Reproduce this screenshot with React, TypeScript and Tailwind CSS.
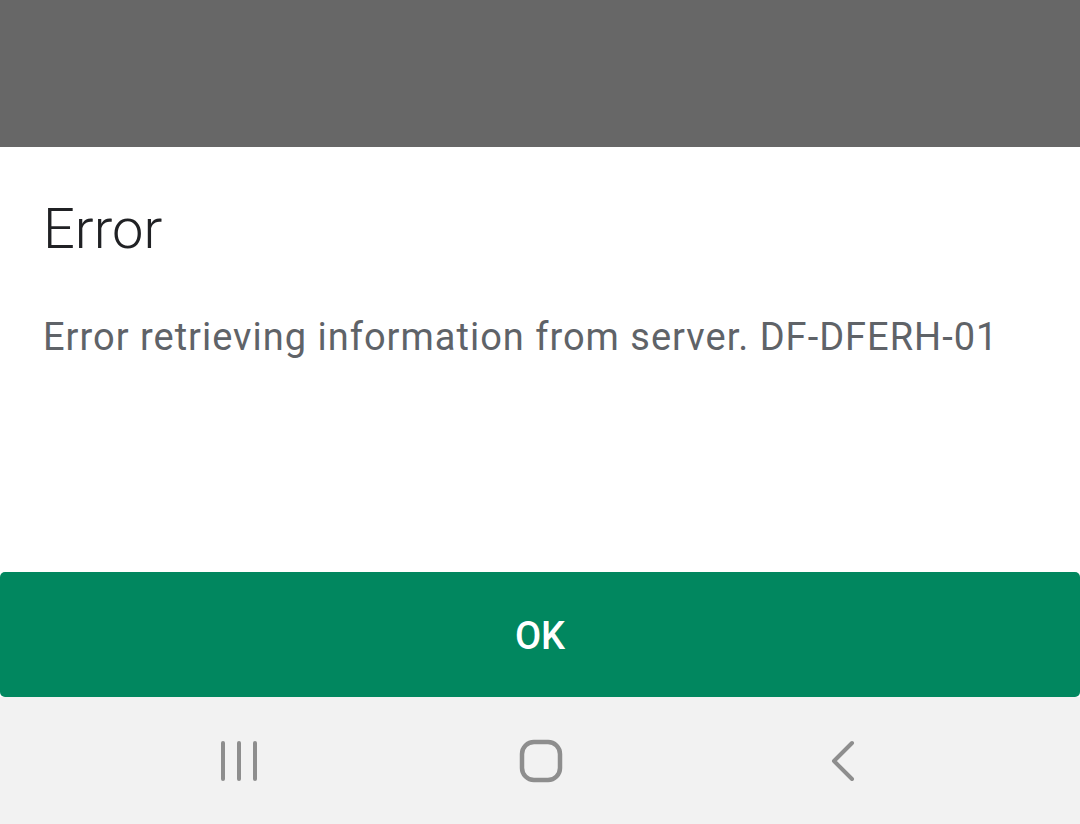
export default function App() {
  return (
    <div
      className="w-[1080px] h-[824px] flex flex-col bg-white"
      style={{ fontFamily: 'Roboto, "Noto Sans", sans-serif' }}
    >
      {/* ── Scrim ── */}
      <div className="h-[147px] shrink-0 bg-[#676767]" />

      {/* ── Dialog body ── */}
      <div className="flex-1 flex flex-col px-[43px] pt-[42px]">
        <h1 className="text-[56px] leading-[80px] font-light text-[#202124]">
          Error
        </h1>
        <p className="mt-[45px] text-[38px] leading-[46px] text-[#5f6368] tracking-[1px] whitespace-nowrap">
          Error retrieving information from server. DF-DFERH-01
        </p>
      </div>

      {/* ── OK button ── */}
      <button className="h-[125px] shrink-0 w-full rounded-[5px] bg-[#01875f] flex items-center justify-center pt-[4px] text-white text-[38px] font-medium">
        OK
      </button>

      {/* ── Nav bar ── */}
      <div className="h-[127px] shrink-0 bg-[#f2f2f2] flex items-center justify-center gap-[242px] pl-[2px]">
        <div className="w-[60px] flex justify-center">
          <svg width="40" height="42" viewBox="0 0 40 42">
            <g stroke="#8e8e8e" strokeWidth="4" strokeLinecap="round">
              <line x1="4" y1="3" x2="4" y2="39" />
              <line x1="20" y1="3" x2="20" y2="39" />
              <line x1="36" y1="3" x2="36" y2="39" />
            </g>
          </svg>
        </div>
        <div className="w-[60px] flex justify-center">
          <svg width="44" height="44" viewBox="0 0 44 44">
            <rect x="3" y="3" width="38" height="38" rx="12" fill="none" stroke="#8e8e8e" strokeWidth="4.5" />
          </svg>
        </div>
        <div className="w-[60px] flex justify-center">
          <svg width="28" height="42" viewBox="0 0 28 42">
            <polyline points="23,3 5,21 23,39" fill="none" stroke="#8e8e8e" strokeWidth="4" strokeLinecap="round" strokeLinejoin="round" />
          </svg>
        </div>
      </div>
    </div>
  );
}
